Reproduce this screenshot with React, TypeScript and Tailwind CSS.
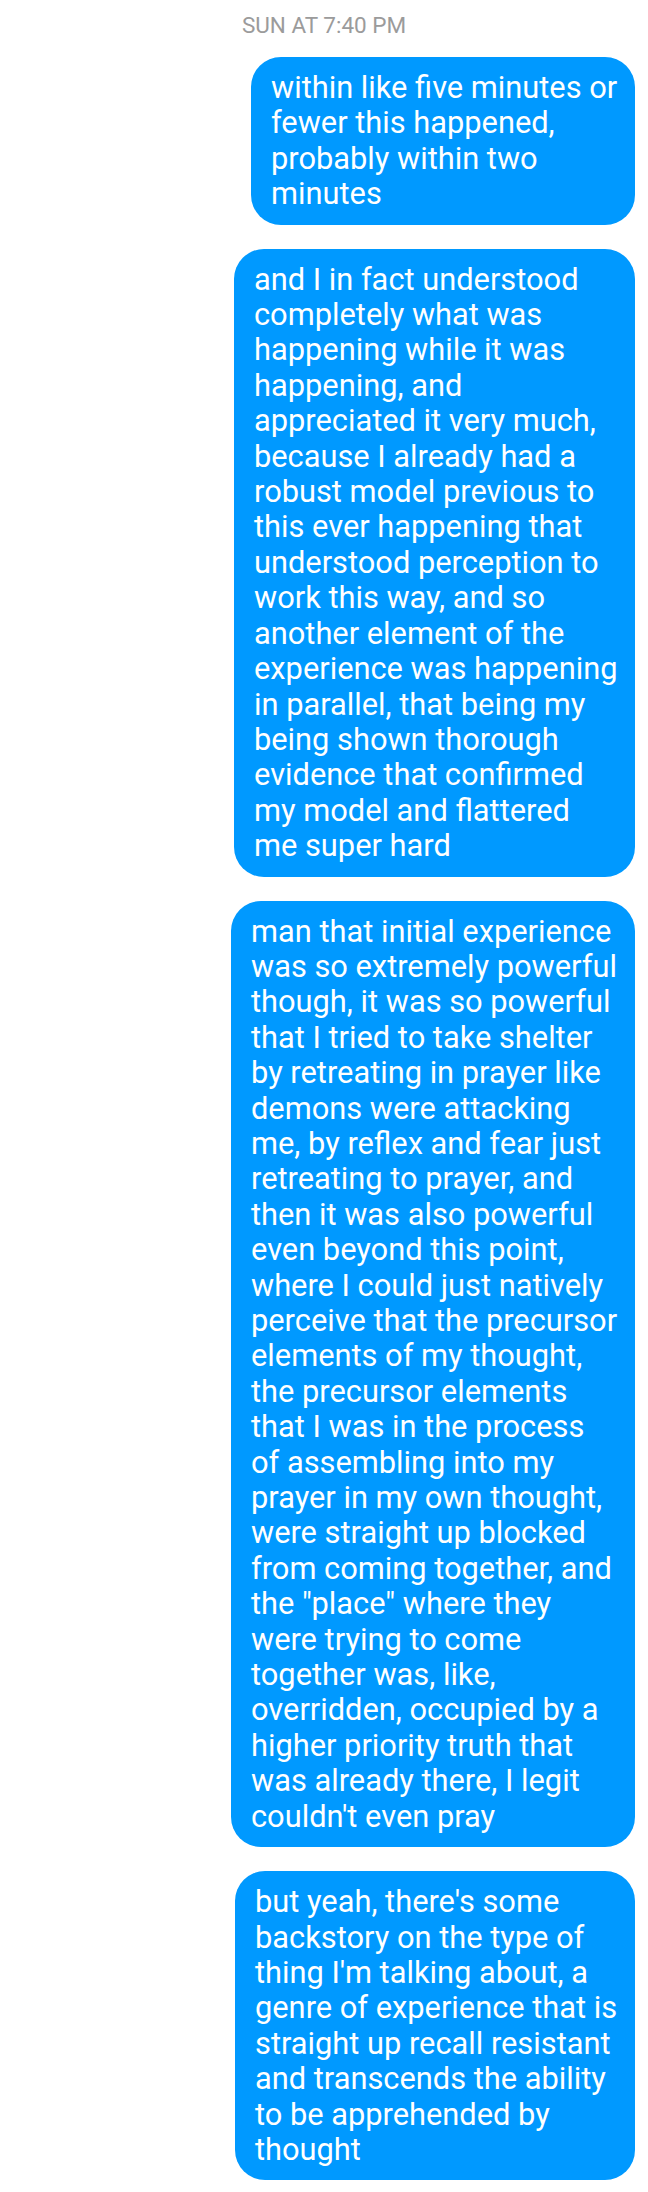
import React from "react";

const bubbles: { w: string; lines: string[] }[] = [
  {
    w: "w-[384px]",
    lines: [
      "within like five minutes or",
      "fewer this happened,",
      "probably within two",
      "minutes",
    ],
  },
  {
    w: "w-[401px]",
    lines: [
      "and I in fact understood",
      "completely what was",
      "happening while it was",
      "happening, and",
      "appreciated it very much,",
      "because I already had a",
      "robust model previous to",
      "this ever happening that",
      "understood perception to",
      "work this way, and so",
      "another element of the",
      "experience was happening",
      "in parallel, that being my",
      "being shown thorough",
      "evidence that confirmed",
      "my model and flattered",
      "me super hard",
    ],
  },
  {
    w: "w-[404px]",
    lines: [
      "man that initial experience",
      "was so extremely powerful",
      "though, it was so powerful",
      "that I tried to take shelter",
      "by retreating in prayer like",
      "demons were attacking",
      "me, by reflex and fear just",
      "retreating to prayer, and",
      "then it was also powerful",
      "even beyond this point,",
      "where I could just natively",
      "perceive that the precursor",
      "elements of my thought,",
      "the precursor elements",
      "that I was in the process",
      "of assembling into my",
      "prayer in my own thought,",
      "were straight up blocked",
      "from coming together, and",
      "the \"place\" where they",
      "were trying to come",
      "together was, like,",
      "overridden, occupied by a",
      "higher priority truth that",
      "was already there, I legit",
      "couldn't even pray",
    ],
  },
  {
    w: "w-[400px]",
    lines: [
      "but yeah, there's some",
      "backstory on the type of",
      "thing I'm talking about, a",
      "genre of experience that is",
      "straight up recall resistant",
      "and transcends the ability",
      "to be apprehended by",
      "thought",
    ],
  },
];

export default function App() {
  return (
    <div className="w-[648px] h-[2192px] bg-white overflow-hidden font-['Roboto',sans-serif]">
      <div className="pt-[11px] text-center text-[22.5px] leading-[28px] text-[#9b9b9b]">
        SUN AT 7:40 PM
      </div>
      <div className="mt-[18px] flex flex-col items-end gap-[24px] pr-[13px]">
        {bubbles.map((b, i) => (
          <div
            key={i}
            className={`${b.w} rounded-[30px] bg-[#0099ff] pl-[20px] pr-[8px] py-[13px] text-white text-[30.8px] leading-[35.4px] whitespace-nowrap`}
          >
            {b.lines.map((l, j) => (
              <div key={j}>{l}</div>
            ))}
          </div>
        ))}
      </div>
    </div>
  );
}
